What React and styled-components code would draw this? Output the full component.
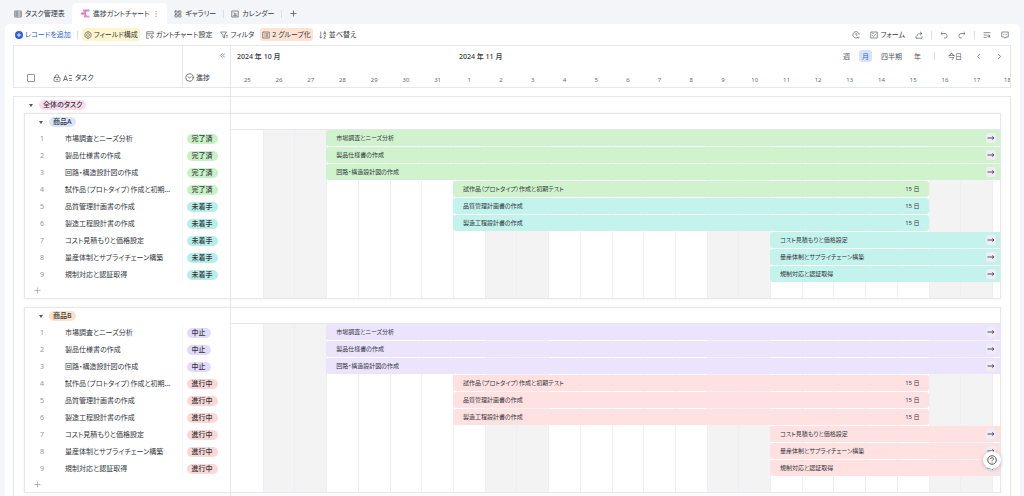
import React, { useState } from 'react';
import styled, { createGlobalStyle, css } from 'styled-components';
import {
  ChevronLeft,
  ChevronRight,
  ChevronsLeft,
  CircleChevronDown,
  EllipsisVertical,
  LayoutGrid,
  LockKeyhole,
  Plus,
  TextSearch,
} from 'lucide-react';

const COLORS = {
  green: { bar: '#d0f3ce', pill: '#c8f1c6' },
  teal: { bar: '#c4f2ec', pill: '#b8eee9' },
  purple: { bar: '#ece3fc', pill: '#e4dafb' },
  red: { bar: '#ffe1e1', pill: '#fcd7d7' },
};

const DAYS = [
  25, 26, 27, 28, 29, 30, 31, 1, 2, 3, 4, 5, 6, 7, 8, 9, 10, 11, 12, 13, 14, 15,
  16, 17, 18,
];

const isWeekend = (index) => index % 7 === 1 || index % 7 === 2;

// start and end are day indexes, a task without an end runs past the view
const TASKS = [
  { name: '市場調査とニーズ分析', start: 3 },
  { name: '製品仕様書の作成', start: 3 },
  { name: '回路・構造設計図の作成', start: 3 },
  { name: '試作品（プロトタイプ）作成と初期テスト', start: 7, end: 22 },
  { name: '品質管理計画書の作成', start: 7, end: 22 },
  { name: '製造工程設計書の作成', start: 7, end: 22 },
  { name: 'コスト見積もりと価格設定', start: 17 },
  { name: '量産体制とサプライチェーン構築', start: 17 },
  { name: '規制対応と認証取得', start: 17 },
];

const GROUPS = [
  {
    name: '商品A',
    color: '#dbe5fc',
    status: (i) => (i < 4 ? ['完了済', 'green'] : ['未着手', 'teal']),
  },
  {
    name: '商品B',
    color: '#fde1c6',
    status: (i) => (i < 3 ? ['中止', 'purple'] : ['進行中', 'red']),
  },
];

const SCALES = ['週', '月', '四半期', '年'];

// Line icons on a 16 unit grid
const ICONS = {
  table: 'M1.5 2h13v12h-13zM1.5 6h13M1.5 10h13M6 2v12',
  calendar: 'M1.5 2h13v12h-13zM5 6h2.5v5M10 6v5M4 11.5h8',
  fields: 'M8 1l6 3.5v7L8 15l-6-3.5v-7zM8 5.2a2.8 2.8 0 1 0 .1 0zM8 1v2M8 13v2',
  gantt:
    'M14.5 6V1.5h-13v13H6M1.5 5.5h13M4.5 8.5h3M11.5 9.2a2.4 2.4 0 1 0 .1 0zM11.5 7.5v1.5M11.5 14v1.5M8 11.5h1M14 11.5h1.5',
  filter: 'M1 2h12L9 8v6l-3-2V8zM11.5 9h4M11.5 12h4',
  group: 'M1.5 2h13v12h-13zM4 5.5h1M7 5.5h5M4 8h1M7 8h5M4 10.5h1M7 10.5h5',
  sort: 'M3.5 1v13M1 11.5 3.5 14.5 6 11.5M9 7l2.5-6L14 7M10 5h3M9.5 9.5h4l-4 5h4',
  clock: 'M12.5 12A6.3 6.3 0 1 1 14.3 7.5M8 4v4.2h3M10.5 11.5l2 3 2.5-3',
  form: 'M1.5 2h13v12h-13zM4.5 8.5 7 11l5-5.5M4.5 5h3',
  share: 'M2 10v4.5h12V11M4 10c0-3.5 3-5 9.5-5M10 1.5 13.8 5 10 8.5',
  undo: 'M5 2 1.8 5 5 8M2 5h8a4 4 0 0 1 4 4v1a4 4 0 0 1-4 4H8',
  redo: 'M11 2l3.2 3L11 8M14 5H6a4 4 0 0 0-4 4v1a4 4 0 0 0 4 4h2',
  comment: 'M1.5 2h13v10H10l-2 2.5L6 12H1.5zM4.6 7h1.4M7.3 7h1.4M10 7h1.4',
  arrow: 'M1 8h13M10.5 5 14 8l-3.5 3',
  help: 'M8 1.2a6.8 6.8 0 1 0 .1 0zM5.8 6.3a2.2 2.2 0 1 1 3.2 2Q8 8.8 8 9.8M8 11.3v1.2',
};

function Icon({ name, size = 8, width = 1.3 }) {
  return (
    <svg
      width={size}
      height={size}
      viewBox="0 0 16 16"
      fill="none"
      stroke="currentColor"
      strokeWidth={width}
    >
      <path d={ICONS[name]} />
    </svg>
  );
}

function GanttLogo() {
  return (
    <svg width="9" height="9" viewBox="0 0 18 18">
      <rect x="4" y="1" width="13" height="4" rx="1" fill="#d070dc" />
      <rect x="0" y="7" width="10" height="4" rx="1" fill="#e0569f" />
      <rect x="6" y="13" width="11" height="4" rx="1" fill="#ee82bc" />
      <path d="M11 4q-3 0-3 3v4q0 3 3 3" fill="none" stroke="#dc62b4" strokeWidth="3" />
    </svg>
  );
}

function TextFieldIcon() {
  return (
    <svg width="10" height="8" viewBox="0 0 10 8" fill="none" stroke="currentColor">
      <path d="M.5 7 2.5 1.5 4.5 7M1 5.5h3" strokeWidth="0.8" />
      <path d="M6 1.5h3M6 4.5h3M6 6.5h3" strokeWidth="0.7" />
    </svg>
  );
}

function TaskGroup({ group }) {
  const [open, setOpen] = useState(true);

  return (
    <Group>
      <GroupTitle>
        <TitleCell $indent={12}>
          <Toggle
            aria-label={group.name}
            aria-expanded={open}
            onClick={() => setOpen(!open)}
          />
          <Pill $color={group.color}>{group.name}</Pill>
        </TitleCell>
        <TitleRest />
      </GroupTitle>
      {open && (
        <GroupBody>
          <div>
            <TaskTable aria-label={group.name}>
              <colgroup>
                <col width="34" />
                <col />
                <col width="48" />
              </colgroup>
              <tbody>
                {TASKS.map((task, i) => {
                  const [label, color] = group.status(i);
                  return (
                    <tr key={task.name}>
                      <NumberCell>{i + 1}</NumberCell>
                      <NameCell>{task.name}</NameCell>
                      <StatusCell>
                        <Pill $color={COLORS[color].pill}>{label}</Pill>
                      </StatusCell>
                    </tr>
                  );
                })}
              </tbody>
            </TaskTable>
            <AddRow aria-label="追加">
              <Plus size={9} strokeWidth={2} />
            </AddRow>
          </div>
          <Chart>
            {DAYS.map((day, i) => (
              <DayColumn key={day + '-' + i} $index={i} $off={isWeekend(i)} />
            ))}
            {TASKS.map((task, i) => (
              <Bar
                key={task.name}
                $row={i + 1}
                $start={task.start}
                $end={task.end}
                $color={COLORS[group.status(i)[1]].bar}
              >
                <span>{task.name}</span>
                {task.end ? (
                  <span>{task.end - task.start} 日</span>
                ) : (
                  <JumpButton aria-label={task.name}>
                    <Icon name="arrow" width={2} />
                  </JumpButton>
                )}
              </Bar>
            ))}
          </Chart>
        </GroupBody>
      )}
    </Group>
  );
}

export default function App() {
  const [scale, setScale] = useState('月');
  const [open, setOpen] = useState(true);

  return (
    <Page>
      <GlobalStyle />
      <Tabs>
        <Tab>
          <Icon name="table" />
          タスク管理表
        </Tab>
        <Tab $active>
          <GanttLogo />
          進捗ガントチャート
          <MoreIcon size={8} />
        </Tab>
        <Tab>
          <LayoutGrid size={8} />
          ギャラリー
        </Tab>
        <Divider />
        <Tab>
          <Icon name="calendar" />
          カレンダー
        </Tab>
        <Divider />
        <Tab aria-label="追加">
          <Plus size={9} />
        </Tab>
      </Tabs>

      <Panel>
        <Toolbar>
          <Tool $primary>
            <AddIcon>
              <Plus size={6} strokeWidth={4} />
            </AddIcon>
            レコードを追加
          </Tool>
          <Divider />
          <Tool $color="#fdf5cd">
            <Icon name="fields" />
            フィールド構成
          </Tool>
          <Tool>
            <Icon name="gantt" />
            ガントチャート設定
          </Tool>
          <Tool>
            <Icon name="filter" />
            フィルタ
          </Tool>
          <Tool $color="#fee3d3">
            <Icon name="group" />2 グループ化
          </Tool>
          <Tool>
            <Icon name="sort" />
            並べ替え
          </Tool>
          <Actions>
            <Tool aria-label="履歴">
              <Icon name="clock" />
            </Tool>
            <Tool>
              <Icon name="form" />
              フォーム
            </Tool>
            <Tool aria-label="共有">
              <Icon name="share" />
            </Tool>
            <Divider />
            <Tool aria-label="元に戻す">
              <Icon name="undo" />
            </Tool>
            <Tool aria-label="やり直す">
              <Icon name="redo" />
            </Tool>
            <Divider />
            <Tool aria-label="検索">
              <TextSearch size={8} />
            </Tool>
            <Tool aria-label="コメント">
              <Icon name="comment" />
            </Tool>
          </Actions>
        </Toolbar>

        <Board>
          <Header>
            <FieldHeader>
              <TaskField>
                <CheckAll type="checkbox" aria-label="タスク" />
                <LockKeyhole size={8} />
                <TextFieldIcon />
                タスク
              </TaskField>
              <StatusField>
                <Collapse aria-label="閉じる">
                  <ChevronsLeft size={9} />
                </Collapse>
                <FieldName>
                  <CircleChevronDown size={9} />
                  進捗
                </FieldName>
              </StatusField>
            </FieldHeader>
            <TimeHeader>
              <Month $from={1} $to={8}>
                2024 年 10 月
              </Month>
              <Month $from={8} $to={-1}>
                2024 年 11 月
                <Scales>
                  {SCALES.map((name) => (
                    <Scale
                      key={name}
                      $active={name === scale}
                      onClick={() => setScale(name)}
                    >
                      {name}
                    </Scale>
                  ))}
                  <Divider $space={4} />
                  <Scale>今日</Scale>
                  <Scale aria-label="前へ">
                    <ChevronLeft size={9} />
                  </Scale>
                  <Scale aria-label="次へ">
                    <ChevronRight size={9} />
                  </Scale>
                </Scales>
              </Month>
              {DAYS.map((day, i) => (
                <Day key={day + '-' + i}>{day}</Day>
              ))}
            </TimeHeader>
          </Header>

          <Outer>
            <TitleCell $indent={13}>
              <Toggle
                aria-label="全体のタスク"
                aria-expanded={open}
                onClick={() => setOpen(!open)}
              />
              <Pill $color="#fcdcec">全体のタスク</Pill>
            </TitleCell>
            {open && (
              <GroupList>
                {GROUPS.map((group) => (
                  <TaskGroup key={group.name} group={group} />
                ))}
              </GroupList>
            )}
          </Outer>
        </Board>
      </Panel>

      <Help aria-label="ヘルプ">
        <Icon name="help" size={10} width={1.6} />
      </Help>
    </Page>
  );
}

const GlobalStyle = createGlobalStyle`
  * {
    box-sizing: border-box;
  }
  body {
    margin: 0;
    overflow: hidden;
    background: #f4f5f8;
    color: #33373d;
    font-family: 'Noto Sans', 'Noto Sans CJK JP', sans-serif;
    font-size: 7px;
    line-height: 11px;
    font-feature-settings: 'palt';
  }
  button {
    display: flex;
    align-items: center;
    padding: 0;
    border: 0;
    background: none;
    color: inherit;
    font: inherit;
    font-feature-settings: inherit;
    white-space: nowrap;
    cursor: pointer;
  }
  svg {
    display: block;
    flex: none;
    opacity: 0.85;
  }
`;

const line = '#e6e7ea';

const dayGrid = css`
  display: grid;
  grid-template-columns: repeat(24, minmax(0, 1fr)) ${(props) => props.$tail}px;
`;

const Page = styled.div`
  display: flex;
  flex-direction: column;
  height: 100vh;
`;
const Tabs = styled.nav`
  display: flex;
  align-items: center;
  height: 24px;
  padding: 3px 7px 0;
`;
const Tab = styled.button`
  gap: 3px;
  height: 21px;
  padding: 0 7px;
  border-radius: 5px 5px 0 0;
  ${(props) => props.$active && 'padding-left: 9px; background: #fff;'}
`;
const MoreIcon = styled(EllipsisVertical)`
  color: #a2a7af;
`;
const Divider = styled.span`
  width: 1px;
  height: 8px;
  margin: 0 ${(props) => props.$space || 0}px;
  background: #dcdee2;
`;
const Panel = styled.main`
  flex: 1;
  min-height: 0;
  margin: 0 4px 0 5px;
  overflow: hidden;
  background: #fff;
  border-radius: 5px 5px 0 0;
`;
const Toolbar = styled.div`
  display: flex;
  align-items: center;
  gap: 4px;
  height: 21px;
  padding: 0 9px 0 8px;
`;
const Tool = styled.button`
  gap: 2px;
  height: 13px;
  padding: 0 2px;
  border-radius: 3px;
  background: ${(props) => props.$color || 'transparent'};
  color: ${(props) => (props.$primary ? '#2b5fd9' : 'inherit')};
`;
const AddIcon = styled.span`
  display: flex;
  align-items: center;
  justify-content: center;
  width: 8px;
  height: 8px;
  border-radius: 50%;
  background: #2b5fd9;
  color: #fff;
`;
const Actions = styled.div`
  display: flex;
  align-items: center;
  gap: 6px;
  margin-left: auto;
`;
const Board = styled.div`
  margin: 0 9px 0 8px;
  background: linear-gradient(${line}, ${line}) 217px 0 / 1px 100% no-repeat;
`;
const Header = styled.div`
  display: grid;
  grid-template-columns: 217px minmax(0, 1fr);
  height: 43px;
  margin-bottom: 8px;
  border: 1px solid ${line};
`;
const FieldHeader = styled.div`
  display: flex;
`;
const TaskField = styled.div`
  display: flex;
  flex: 1;
  align-items: center;
  align-self: flex-end;
  gap: 2px;
  padding: 0 0 4px 13px;
`;
const CheckAll = styled.input`
  appearance: none;
  width: 8px;
  height: 8px;
  margin: 0 16px 0 0;
  border: 1px solid #8f959e;
  border-radius: 1px;
  &:checked {
    background: #2b5fd9;
  }
`;
const StatusField = styled.div`
  display: flex;
  flex-direction: column;
  justify-content: space-between;
  width: 49px;
  padding: 5px 4px 4px 2px;
  border-left: 1px solid ${line};
`;
const Collapse = styled.button`
  align-self: flex-end;
  color: #646a73;
`;
const FieldName = styled.div`
  display: flex;
  align-items: center;
  gap: 2px;
`;
const TimeHeader = styled.div.attrs({ $tail: 18 })`
  ${dayGrid}
  grid-template-rows: 20px 21px;
`;
const Month = styled.div`
  grid-column: ${(props) => props.$from} / ${(props) => props.$to};
  display: flex;
  align-items: center;
  justify-content: space-between;
  padding-left: 6px;
  font-weight: 500;
`;
const Scales = styled.div`
  display: flex;
  align-items: center;
  gap: 6px;
  padding-right: 3px;
  font-weight: 400;
  color: #51565d;
`;
const Scale = styled.button`
  height: 12px;
  padding: 0 3px;
  border-radius: 3px;
  ${(props) => props.$active && 'background: #d6e3fd; color: #2b5fd9;'}
`;
const Day = styled.div`
  overflow: hidden;
  padding-top: 9px;
  padding-left: 12px;
  color: #646a73;
  font-size: 6px;
  &:not(:last-child) {
    padding-right: 11px;
    text-align: center;
  }
`;
const Outer = styled.section`
  border: 1px solid ${line};
`;
const TitleCell = styled.div`
  display: flex;
  align-items: center;
  gap: 4px;
  height: 16px;
  padding-left: ${(props) => props.$indent}px;
`;
const Toggle = styled.button`
  justify-content: center;
  width: 8px;
  height: 8px;
  &::before {
    content: '';
    border: 2px solid transparent;
    border-top: 3px solid #51565d;
    border-bottom: 0;
  }
`;
const Pill = styled.span`
  display: inline-block;
  padding: 0 4px;
  border-radius: 6px;
  background: ${(props) => props.$color};
  font-weight: 500;
  line-height: 10px;
`;
const GroupList = styled.div`
  display: grid;
  gap: 8px;
  padding: 0 9px 8px 10px;
`;
const Group = styled.section`
  border: 1px solid ${line};
  box-shadow: 0 0 3px rgba(31, 35, 41, 0.06);
`;
const GroupTitle = styled.div`
  display: grid;
  grid-template-columns: 206px minmax(0, 1fr);
`;
const TitleRest = styled.div`
  border-bottom: 1px solid ${line};
`;
const GroupBody = styled.div`
  display: grid;
  grid-template-columns: 205px minmax(0, 1fr);
  column-gap: 1px;
`;
const TaskTable = styled.table`
  width: 100%;
  table-layout: fixed;
  border-collapse: collapse;
  td {
    height: 17px;
    padding: 0;
  }
`;
const NumberCell = styled.td`
  color: #8f959e;
  text-align: center;
`;
const NameCell = styled.td`
  && {
    padding: 0 8px 0 6px;
  }
  overflow: hidden;
  text-overflow: ellipsis;
  white-space: nowrap;
`;
const StatusCell = styled.td`
  && {
    padding-left: 4px;
  }
  border-left: 1px solid #f7f7f8;
  ${Pill} {
    padding: 0 5px;
  }
`;
const AddRow = styled.button`
  width: 100%;
  height: 15px;
  padding-left: 8px;
  color: #8f959e;
`;
const Chart = styled.div.attrs({ $tail: 8 })`
  ${dayGrid}
  grid-template-rows: repeat(9, 17px) 15px;
`;
const DayColumn = styled.div`
  grid-row: 1 / -1;
  grid-column: ${(props) => props.$index + 1};
  border-left: ${(props) => (props.$index ? '1px solid #eeeff0' : '0')};
  background: ${(props) => (props.$off ? '#f3f3f3' : 'transparent')};
`;
const Bar = styled.div`
  grid-row: ${(props) => props.$row};
  grid-column: ${(props) => props.$start + 1} /
    ${(props) => (props.$end ? props.$end + 1 : -1)};
  display: flex;
  align-items: center;
  justify-content: space-between;
  margin-bottom: 1px;
  padding: 0 ${(props) => (props.$end ? 9 : 4)}px 0 10px;
  border-radius: ${(props) => (props.$end ? '3px' : '3px 0 0 3px')};
  background: ${(props) => props.$color};
  font-size: 6px;
  white-space: nowrap;
`;
const JumpButton = styled.button`
  justify-content: center;
  width: 10px;
  height: 10px;
  border-radius: 2px;
  background: #eeedf3;
  color: #3a2f55;
`;
const Help = styled.button`
  position: fixed;
  right: 23px;
  bottom: 27px;
  justify-content: center;
  width: 18px;
  height: 18px;
  border-radius: 50%;
  background: #fff;
  box-shadow: 0 1px 4px rgba(31, 35, 41, 0.25);
`;
